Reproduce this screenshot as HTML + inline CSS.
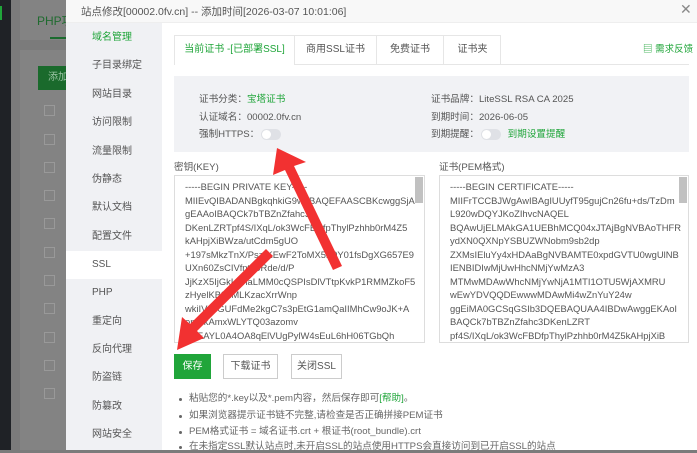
<!DOCTYPE html>
<html><head><meta charset="utf-8"><style>
*{margin:0;padding:0;box-sizing:border-box}
body{width:697px;height:450px;overflow:hidden;position:relative;background:#7b7b7b;font-family:"Liberation Sans","Noto Sans CJK SC",sans-serif;font-size:10px;color:#555}
.abs{position:absolute}
.menu div{position:absolute;left:0;width:96px;height:28px;line-height:28px;padding-left:26px;font-size:10px;color:#555}
.ta{position:absolute;border:1px solid #ddd;background:#fff;font-size:9.4px;line-height:13.5px;color:#555;padding:4px 0 0 10px;overflow:hidden;white-space:nowrap}
.sb{position:absolute;right:1px;top:1px;width:8px;height:26px;background:#c1c1c1}
.btn{position:absolute;top:354px;height:25px;line-height:23px;border:1px solid #ccc;text-align:center;font-size:10px;color:#555;background:#fff}
.li{position:absolute;left:189px;font-size:9.6px;color:#666;line-height:12px}
.li:before{content:"";position:absolute;left:-10px;top:5px;width:3px;height:3px;border-radius:50%;background:#666}
.tg{display:inline-block;width:20px;height:11px;border-radius:6px;background:#dfe1e6;vertical-align:middle;position:relative;margin-left:2px}
.tg:after{content:"";position:absolute;left:1px;top:1px;width:9px;height:9px;border-radius:50%;background:#fff}
</style></head><body>
<div class="abs" style="left:0;top:0;width:11px;height:450px;background:#1f2226"></div>
<div class="abs" style="left:0;top:6px;width:2px;height:14px;background:#20a53a"></div>
<div class="abs" style="left:20px;top:0;width:50px;height:40px;background:#838383"></div>
<div class="abs" style="left:37px;top:12px;color:#1f6b2f;font-size:12px">PHP项</div>
<div class="abs" style="left:50px;top:37px;width:20px;height:2px;background:#1b6b2e"></div>
<div class="abs" style="left:20px;top:50px;width:50px;height:400px;background:#838383"></div>
<div class="abs" style="left:38px;top:66px;width:30px;height:24px;background:#1a6a2c;color:#9bc4a4;font-size:10px;line-height:24px;padding-left:10px">添加</div>
<div class="abs" style="left:44px;top:105px;width:11px;height:11px;border:1px solid #999"></div>
<div class="abs" style="left:44px;top:134px;width:11px;height:11px;border:1px solid #999"></div>
<div class="abs" style="left:44px;top:162px;width:11px;height:11px;border:1px solid #999"></div>
<div class="abs" style="left:44px;top:190px;width:11px;height:11px;border:1px solid #999"></div>
<div class="abs" style="left:44px;top:218px;width:11px;height:11px;border:1px solid #999"></div>
<div class="abs" style="left:44px;top:247px;width:11px;height:11px;border:1px solid #999"></div>
<div class="abs" style="left:44px;top:275px;width:11px;height:11px;border:1px solid #999"></div>
<div class="abs" style="left:44px;top:303px;width:11px;height:11px;border:1px solid #999"></div>
<div class="abs" style="left:44px;top:332px;width:11px;height:11px;border:1px solid #999"></div>
<div class="abs" style="left:44px;top:360px;width:11px;height:11px;border:1px solid #999"></div>
<div class="abs" style="left:44px;top:388px;width:11px;height:11px;border:1px solid #999"></div>

<div class="abs" style="left:66px;top:0;width:631px;height:23px;background:#f8f8f8;border-bottom:1px solid #eee"></div>
<div class="abs" style="left:81px;top:4px;font-size:10.5px;color:#555">站点修改[00002.0fv.cn] -- 添加时间[2026-03-07 10:01:06]</div>
<div class="abs" style="left:680px;top:1px;font-size:14px;color:#888">✕</div>
<div class="abs menu" style="left:66px;top:23px;width:96px;height:427px;background:#f0f1f4">
<div style="top:1px;color:#20a53a">域名管理</div>
<div style="top:29px">子目录绑定</div>
<div style="top:58px">网站目录</div>
<div style="top:86px">访问限制</div>
<div style="top:115px">流量限制</div>
<div style="top:143px">伪静态</div>
<div style="top:171px">默认文档</div>
<div style="top:200px">配置文件</div>
<div style="top:228px;background:#fff">SSL</div>
<div style="top:256px">PHP</div>
<div style="top:285px">重定向</div>
<div style="top:313px">反向代理</div>
<div style="top:341px">防盗链</div>
<div style="top:370px">防篡改</div>
<div style="top:398px">网站安全</div>
</div>
<div class="abs" style="left:162px;top:23px;width:535px;height:427px;background:#fff"></div>

<div class="abs" style="left:174px;top:64px;width:515px;height:1px;background:#e6e6e6"></div>
<div class="abs" style="left:174px;top:35px;width:327px;height:30px;border:1px solid #e6e6e6;border-bottom:none"></div>
<div class="abs" style="left:174px;top:35px;width:121px;height:30px;line-height:28px;text-align:center;color:#20a53a;background:#fff;border-right:1px solid #e6e6e6;border-left:1px solid #e6e6e6;border-top:1px solid #e6e6e6">当前证书 -[已部署SSL]</div>
<div class="abs" style="left:295px;top:36px;width:82px;height:28px;line-height:28px;text-align:center;border-right:1px solid #e6e6e6">商用SSL证书</div>
<div class="abs" style="left:377px;top:36px;width:67px;height:28px;line-height:28px;text-align:center;border-right:1px solid #e6e6e6">免费证书</div>
<div class="abs" style="left:444px;top:36px;width:57px;height:28px;line-height:28px;text-align:center">证书夹</div>
<div class="abs" style="left:643px;top:41px;color:#20a53a;font-size:9.5px">▤ 需求反馈</div>

<div class="abs" style="left:174px;top:76px;width:515px;height:76px;background:#f1f2f5"></div>
<div class="abs" style="left:199px;top:91px;font-size:9.6px">证书分类：<span style="color:#20a53a">宝塔证书</span></div>
<div class="abs" style="left:199px;top:109px;font-size:9.6px">认证域名：00002.0fv.cn</div>
<div class="abs" style="left:199px;top:126px;font-size:9.6px">强制HTTPS：<span class="tg"></span></div>
<div class="abs" style="left:431px;top:91px;font-size:9.6px">证书品牌：LiteSSL RSA CA 2025</div>
<div class="abs" style="left:431px;top:109px;font-size:9.6px">到期时间：2026-06-05</div>
<div class="abs" style="left:431px;top:126px;font-size:9.6px">到期提醒：<span class="tg"></span> <span style="color:#20a53a;margin-left:4px">到期设置提醒</span></div>

<div class="abs" style="left:174px;top:159px;font-size:9.6px">密钥(KEY)</div>
<div class="abs" style="left:439px;top:159px;font-size:9.6px">证书(PEM格式)</div>
<div class="ta" style="left:174px;top:175px;width:251px;height:168px"><div class="sb"></div>-----BEGIN PRIVATE KEY-----<br>MIIEvQIBADANBgkqhkiG9w0BAQEFAASCBKcwggSjA<br>gEAAoIBAQCk7bTBZnZfahc3<br>DKenLZRTpf4S/IXqL/ok3WcFBDfpThylPzhhb0rM4Z5<br>kAHpjXiBWza/utCdm5gUO<br>+197sMkzTnX/PszrKEwF2ToMX5P0Y01fsDgXG657E9<br>UXn60ZsCIVfnt20Rde/d/P<br>JjKzX5IjGkLXhaLMM0cQSPIsDlVTtpKvkP1RMMZkoF5<br>zHyelKB8hMLKzacXrrWnp<br>wkiIVpcGUFdMe2kgC7s3pEtG1amQaIIMhCw9oJK+A<br>onr5kAmxWLYTQ03azomv<br>H5EAYL0A4OA8qElVUgPylW4sEuL6hH06TGbQh</div>
<div class="ta" style="left:439px;top:175px;width:250px;height:168px"><div class="sb"></div>-----BEGIN CERTIFICATE-----<br>MIIFrTCCBJWgAwIBAgIUUyfT95gujCn26fu+ds/TzDm<br>L920wDQYJKoZIhvcNAQEL<br>BQAwUjELMAkGA1UEBhMCQ04xJTAjBgNVBAoTHFR<br>ydXN0QXNpYSBUZWNobm9sb2dp<br>ZXMsIEluYy4xHDAaBgNVBAMTE0xpdGVTU0wgUlNB<br>IENBIDIwMjUwHhcNMjYwMzA3<br>MTMwMDAwWhcNMjYwNjA1MTI1OTU5WjAXMRU<br>wEwYDVQQDEwwwMDAwMi4wZnYuY24w<br>ggEiMA0GCSqGSIb3DQEBAQUAA4IBDwAwggEKAoI<br>BAQCk7bTBZnZfahc3DKenLZRT<br>pf4S/IXqL/ok3WcFBDfpThylPzhhb0rM4Z5kAHpjXiB</div>

<div class="btn" style="left:174px;width:37px;background:#20a53a;border-color:#20a53a;color:#fff">保存</div>
<div class="btn" style="left:223px;width:55px">下载证书</div>
<div class="btn" style="left:291px;width:51px">关闭SSL</div>

<div class="li" style="top:393px">粘贴您的*.key以及*.pem内容，然后保存即可<span style="color:#20a53a">[帮助]</span>。</div>
<div class="li" style="top:410px">如果浏览器提示证书链不完整,请检查是否正确拼接PEM证书</div>
<div class="li" style="top:426px">PEM格式证书 = 域名证书.crt + 根证书(root_bundle).crt</div>
<div class="li" style="top:441px">在未指定SSL默认站点时,未开启SSL的站点使用HTTPS会直接访问到已开启SSL的站点</div>

<svg class="abs" style="left:0;top:0" width="697" height="450">
<g fill="#f23131">
<polygon points="277,148 306,162 294,166 342,266 333,270 285,170 273,175"/>
<polygon points="177,350 182,317 190,324 266,249 273,256 197,331 204,338"/>
</g>
</svg>
</body></html>
